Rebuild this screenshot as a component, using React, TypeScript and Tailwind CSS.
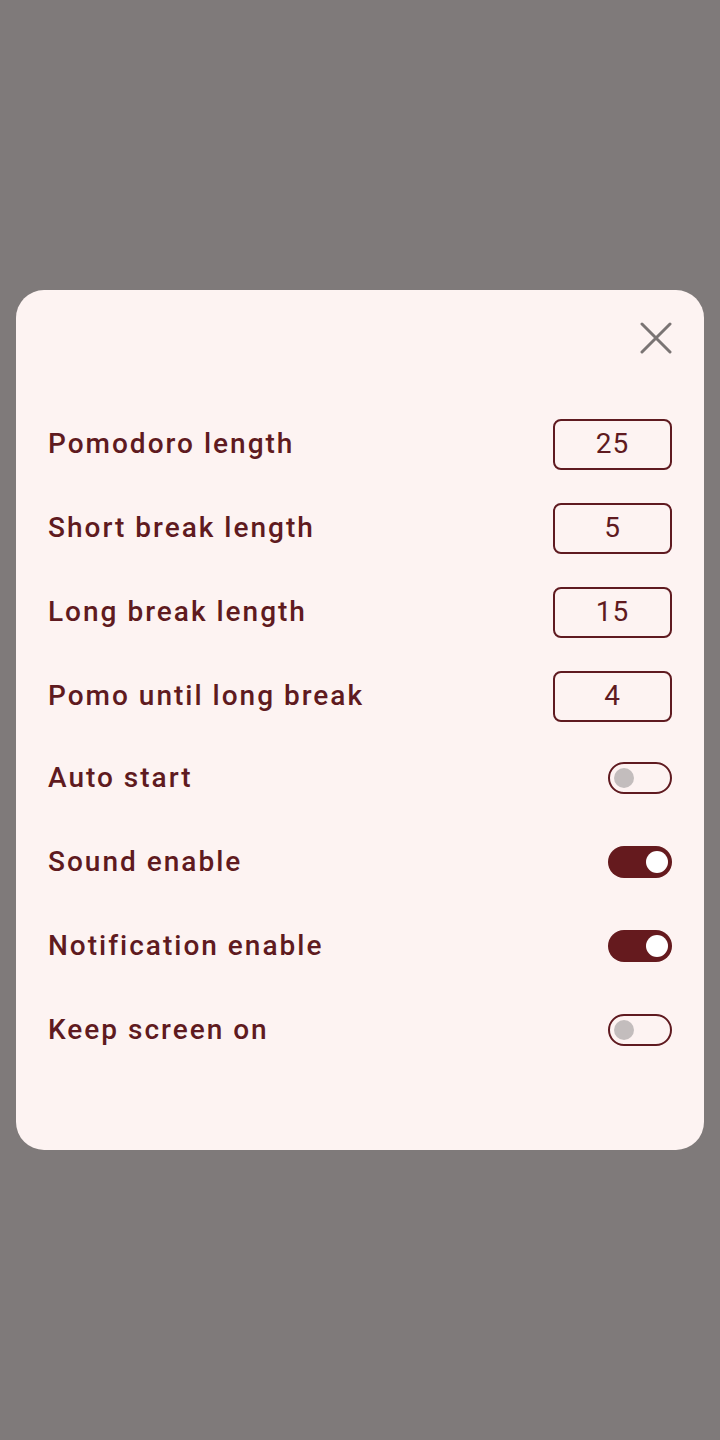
import React from "react";

const labelColor = "text-[#5f1a20]";

function NumberBox({ value }: { value: string }) {
  return (
    <div className="w-[119px] h-[51px] rounded-[8px] border-2 border-[#5f1a20] flex items-center justify-center text-[28px] tracking-[1px] text-[#5f1a20]">
      {value}
    </div>
  );
}

function Toggle({ on }: { on: boolean }) {
  return on ? (
    <div className="w-[64px] h-[32px] rounded-full bg-[#651a1e] flex items-center justify-end pr-[4px]">
      <div className="w-[22px] h-[22px] rounded-full bg-white" />
    </div>
  ) : (
    <div className="w-[64px] h-[32px] rounded-full border-2 border-[#5f1a20] flex items-center pl-[4px]">
      <div className="w-[20px] h-[20px] rounded-full bg-[#c3bdbd]" />
    </div>
  );
}

export default function App() {
  const numbers = [
    ["Pomodoro length", "25"],
    ["Short break length", "5"],
    ["Long break length", "15"],
    ["Pomo until long break", "4"],
  ];
  const toggles: [string, boolean][] = [
    ["Auto start", false],
    ["Sound enable", true],
    ["Notification enable", true],
    ["Keep screen on", false],
  ];
  return (
    <div
      className="min-h-screen w-full bg-[#7f7a7a] flex items-center justify-center px-[16px]"
      style={{ fontFamily: "Roboto, 'Noto Sans', sans-serif" }}
    >
      <div className="w-full bg-[#fdf3f2] rounded-[28px] px-[32px] pt-[32px] pb-[78px] flex flex-col">
        <div className="flex justify-end">
          <svg width="32" height="32" viewBox="0 0 32 32">
            <path d="M2 2 L30 30 M30 2 L2 30" stroke="#7a7474" strokeWidth="3" strokeLinecap="round" />
          </svg>
        </div>
        <div className="mt-[48px] flex flex-col">
          {numbers.map(([l, v]) => (
            <div key={l} className="h-[84px] flex items-center justify-between">
              <span className={`text-[28px] font-medium tracking-[2px] ${labelColor}`}>{l}</span>
              <NumberBox value={v} />
            </div>
          ))}
        </div>
        <div className="mt-[-2px] flex flex-col">
          {toggles.map(([l, on]) => (
            <div key={l} className="h-[84px] flex items-center justify-between">
              <span className={`text-[28px] font-medium tracking-[2px] ${labelColor}`}>{l}</span>
              <Toggle on={on} />
            </div>
          ))}
        </div>
      </div>
    </div>
  );
}
